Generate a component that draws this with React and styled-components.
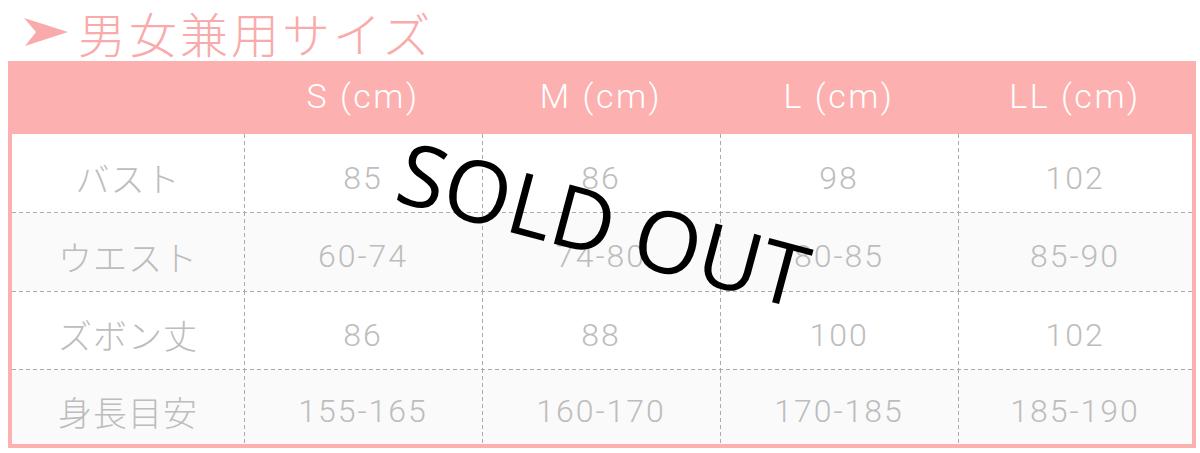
import React from "react";
import styled, { createGlobalStyle } from "styled-components";

const GlobalStyle = createGlobalStyle`
  body {
    margin: 0;
    background: #fff;
    font-family: "Roboto", "Noto Sans CJK JP", sans-serif;
  }
`;

const PINK = "#fdb0b0";
const DASH_H = "repeating-linear-gradient(to right, #ababab 0 4px, transparent 4px 7px)";
const DASH_V = "repeating-linear-gradient(to bottom, #ababab 0 4px, transparent 4px 7px)";

const Page = styled.div`
  width: 1200px;
  height: 453px;
  padding-left: 8px;
  box-sizing: border-box;
`;

const Title = styled.h1`
  display: flex;
  align-items: center;
  gap: 10px;
  margin: 0;
  padding: 3px 0 0 16px;
  font-family: "Noto Sans CJK JP", sans-serif;
  font-weight: 300;
  font-size: 48px;
  letter-spacing: 3px;
  color: #f9abab;
  line-height: 58px;
`;

const Table = styled.div`
  position: relative;
  width: 1188px;
  border: 4px solid ${PINK};
  border-top: none;
  box-sizing: border-box;
`;

const Row = styled.div`
  display: grid;
  grid-template-columns: 232px 238px 238px 238px 1fr;
  height: ${(p) => p.$h}px;
  background: ${(p) => (p.$first ? "none" : `${DASH_H} top left / 100% 1px no-repeat`)},
    ${(p) => (p.$alt ? "#fafafa" : "#fff")};
`;

const HeadRow = styled(Row)`
  background: ${PINK};
`;

const HeadCell = styled.div`
  display: flex;
  align-items: center;
  justify-content: center;
  padding-bottom: 4px;
  font-family: "Roboto", sans-serif;
  font-weight: 300;
  font-size: 34px;
  letter-spacing: 2.5px;
  color: #fff;
`;

const Cell = styled.div`
  display: flex;
  align-items: center;
  justify-content: center;
  padding-top: 9px;
  box-sizing: border-box;
  background: ${(p) => (p.$label ? "none" : `${DASH_V} top left / 1px 100% no-repeat`)};
  font-family: ${(p) =>
    p.$label ? `"Noto Sans CJK JP", sans-serif` : `"Roboto", sans-serif`};
  font-weight: 300;
  font-size: ${(p) => (p.$label ? 34 : 32)}px;
  letter-spacing: ${(p) => (p.$label ? 1 : 2)}px;
  color: #bdbdbd;
`;

const SoldOut = styled.div`
  position: absolute;
  left: 592px;
  top: 162px;
  transform: translate(-50%, -50%) rotate(15deg);
  font-family: "Open Sans", sans-serif;
  font-size: 86px;
  line-height: 1;
  color: #000;
  white-space: nowrap;
  pointer-events: none;
`;

const Arrow = () => (
  <svg width="44" height="28" viewBox="0 0 44 28">
    <path d="M0 0 L44 14 L1 28 L12 14 Z" fill="#f9abab" />
  </svg>
);

const heads = ["S (cm)", "M (cm)", "L (cm)", "LL (cm)"];

const rows = [
  { label: "バスト", values: ["85", "86", "98", "102"], h: 78 },
  { label: "ウエスト", values: ["60-74", "74-80", "80-85", "85-90"], h: 79 },
  { label: "ズボン丈", values: ["86", "88", "100", "102"], h: 78 },
  { label: "身長目安", values: ["155-165", "160-170", "170-185", "185-190"], h: 75 },
];

export default function App() {
  return (
    <>
      <GlobalStyle />
      <Page>
        <Title>
          <Arrow />
          <span>男女兼用サイズ</span>
        </Title>
        <Table>
          <HeadRow $h={73} $first>
            <HeadCell />
            {heads.map((h) => (
              <HeadCell key={h}>{h}</HeadCell>
            ))}
          </HeadRow>
          {rows.map((r, i) => (
            <Row key={r.label} $h={r.h} $alt={i % 2 === 1} $first={i === 0}>
              <Cell $label>{r.label}</Cell>
              {r.values.map((v, j) => (
                <Cell key={j}>{v}</Cell>
              ))}
            </Row>
          ))}
          <SoldOut>SOLD OUT</SoldOut>
        </Table>
      </Page>
    </>
  );
}
